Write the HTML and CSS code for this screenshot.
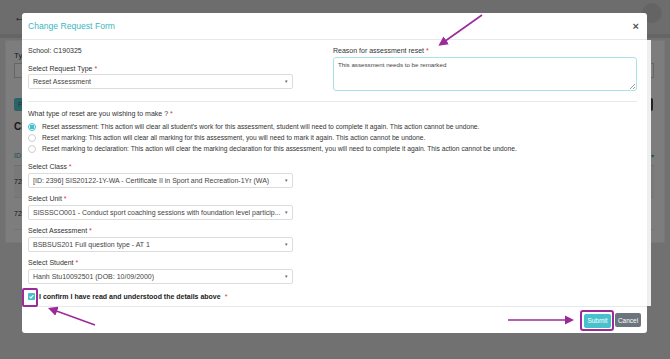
FILE: index.html
```html
<!DOCTYPE html>
<html lang="en">
<head>
  <meta charset="UTF-8">
  <meta name="viewport" content="width=device-width, initial-scale=1.0">
  <title>Change Request Form</title>
  <link rel="stylesheet" href="styles.css">
</head>
<body>
  <div class="page">
    <header class="topbar">
      <span class="back">&#8592;</span>
      <span class="avatar"></span>
    </header>
    <main class="content">
      <section class="card">
        <div class="bg-row filters">
          <div class="bg-left">
            <span class="bg-label">Type</span>
            <div class="bg-input"></div>
          </div>
          <div class="bg-right">
            <div class="bg-select">&#9662;</div>
          </div>
        </div>
        <div class="bg-row actions">
          <span class="bg-btn teal">P</span>
          <span class="bg-btn dark">&#215;</span>
        </div>
        <h2 class="bg-title">Classes</h2>
        <div class="bg-row head">
          <span class="bg-id">ID</span>
          <span class="bg-link">&#9662;</span>
        </div>
        <div class="bg-row item shaded"><span>728</span><span class="bg-link">&#9662;</span></div>
        <div class="bg-row item"><span>727</span><span class="bg-link">&#9662;</span></div>
      </section>
    </main>
  </div>

  <div class="backdrop"></div>

  <div class="modal">
    <div class="modal-header">
      <h1 class="modal-title">Change Request Form</h1>
      <span class="close">&#215;</span>
    </div>
    <div class="modal-body">
      <div class="top-grid">
        <div>
          <p class="school">School: C190325</p>
          <label class="field-label first">Select Request Type <span class="req">*</span></label>
          <div class="select">Reset Assessment<span class="caret">&#9662;</span></div>
        </div>
        <div>
          <label class="field-label">Reason for assessment reset <span class="req">*</span></label>
          <div class="textarea">This assessment needs to be remarked<span class="grip"></span></div>
        </div>
      </div>
      <hr class="divider">
      <p class="field-label question">What type of reset are you wishing to make ? <span class="req">*</span></p>
      <ul class="radios">
        <li><span class="radio checked"></span><span>Reset assessment: This action will clear all student's work for this assessment, student will need to complete it again. This action cannot be undone.</span></li>
        <li><span class="radio"></span><span>Reset marking: This action will clear all marking for this assessment, you will need to mark it again. This action cannot be undone.</span></li>
        <li><span class="radio"></span><span>Reset marking to declaration: This action will clear the marking declaration for this assessment, you will need to complete it again. This action cannot be undone.</span></li>
      </ul>
      <div class="group">
        <label class="field-label">Select Class <span class="req">*</span></label>
        <div class="select">[ID: 2396] SIS20122-1Y-WA - Certificate II in Sport and Recreation-1Yr (WA)<span class="caret">&#9662;</span></div>
      </div>
      <div class="group">
        <label class="field-label">Select Unit <span class="req">*</span></label>
        <div class="select">SISSSCO001 - Conduct sport coaching sessions with foundation level particip...<span class="caret">&#9662;</span></div>
      </div>
      <div class="group">
        <label class="field-label">Select Assessment <span class="req">*</span></label>
        <div class="select">BSBSUS201 Full question type - AT 1<span class="caret">&#9662;</span></div>
      </div>
      <div class="group">
        <label class="field-label">Select Student <span class="req">*</span></label>
        <div class="select">Hanh Stu10092501 (DOB: 10/09/2000)<span class="caret">&#9662;</span></div>
      </div>
      <div class="confirm">
        <span class="check-wrap">
          <span class="checkbox">
            <svg viewBox="0 0 8 8" width="7" height="7"><path d="M1.8 4.2 L3.3 5.6 L6.2 2.4" fill="none" stroke="#fff" stroke-width="1.2"/></svg>
          </span>
          <span class="highlight-box"></span>
        </span>
        <span class="confirm-text">I confirm I have read and understood the details above</span>
        <span class="req">*</span>
      </div>
    </div>
    <div class="modal-footer">
      <span class="submit-ring"><button class="btn btn-submit">Submit</button></span>
      <button class="btn btn-cancel">Cancel</button>
    </div>
    <span class="scroll-strip"></span>
  </div>

  <svg class="arrows" width="670" height="359" viewBox="0 0 670 359">
    <defs>
      <marker id="head" markerWidth="6" markerHeight="6" refX="4" refY="3" orient="auto" markerUnits="strokeWidth">
        <path d="M0 0 L6 3 L0 6 Z" fill="#9a2b98"/>
      </marker>
    </defs>
    <line x1="482" y1="15" x2="441" y2="44" stroke="#9a2b98" stroke-width="1.6" marker-end="url(#head)"/>
    <line x1="95" y1="325" x2="51" y2="309" stroke="#9a2b98" stroke-width="1.6" marker-end="url(#head)"/>
    <line x1="508" y1="320" x2="571" y2="320" stroke="#9a2b98" stroke-width="1.6" marker-end="url(#head)"/>
  </svg>
</body>
</html>
```

FILE: styles.css
```css
* {
  box-sizing: border-box;
}

html, body {
  margin: 0;
  padding: 0;
}

body {
  width: 670px;
  height: 359px;
  overflow: hidden;
  position: relative;
  font-family: "Liberation Sans", Arial, sans-serif;
  color: #333;
  background: #e2e2e2;
}

/* page behind the modal */
.page {
  height: 359px;
}

.topbar {
  height: 38px;
  background: #dadada;
  display: flex;
  align-items: center;
  justify-content: space-between;
  padding: 0 8px 0 14px;
  border-bottom: 4px solid #cacaca;
}

.back {
  font-size: 12px;
  color: #333;
}

.avatar {
  width: 20px;
  height: 20px;
  border-radius: 50%;
  background: #c9c9c9;
  margin-top: -8px;
}

.content {
  padding: 2px 5px;
}

.card {
  background: #fbfbfb;
  border: 1px solid #eee;
  height: 203px;
  padding: 10px 10px 0 8px;
}

.bg-row {
  display: flex;
  justify-content: space-between;
  align-items: center;
}

.bg-label {
  font-size: 8px;
  display: block;
}

.bg-input {
  width: 60px;
  height: 15px;
  border: 1px solid #ccc;
  background: #fff;
  margin-top: 3px;
}

.bg-select {
  width: 30px;
  height: 15px;
  border: 1px solid #ccc;
  background: #fff;
  font-size: 6px;
  text-align: right;
  padding: 3px 3px 0 0;
  margin-top: 12px;
}

.actions {
  margin-top: 20px;
  padding-right: 1px;
}

.bg-btn {
  display: inline-block;
  height: 13px;
  font-size: 7px;
  line-height: 13px;
  padding: 0 4px;
  color: #fff;
  border-radius: 2px;
}

.bg-btn.teal {
  background: #59c6cf;
  color: #2a7a80;
  width: 24px;
}

.bg-btn.dark {
  background: #444;
  width: 14px;
}

.bg-title {
  font-size: 10px;
  margin: 10px 0 0;
}

.head {
  margin-top: 20px;
  font-size: 7px;
  color: #2a9fab;
  border-bottom: 1px solid #ddd;
  padding-bottom: 6px;
}

.bg-link {
  color: #2a9fab;
  font-size: 6px;
}

.item {
  height: 32px;
  font-size: 7px;
  border-bottom: 1px solid #e6e6e6;
  padding-right: 4px;
}

.item.shaded {
  background: #f3f3f3;
}

.backdrop {
  position: absolute;
  inset: 0;
  background: rgba(0, 0, 0, 0.5);
}

/* modal */
.modal {
  position: absolute;
  left: 22px;
  top: 13px;
  width: 625px;
  height: 320px;
  background: #fff;
  border-radius: 3px;
  display: flex;
  flex-direction: column;
}

.modal-header {
  height: 27px;
  flex: none;
  display: flex;
  align-items: center;
  justify-content: space-between;
  padding: 0 8px 0 6px;
  border-bottom: 1px solid #e6e9ec;
}

.modal-title {
  margin: 0;
  font-size: 8.6px;
  font-weight: normal;
  color: #3cb6c4;
}

.close {
  font-size: 11px;
  font-weight: bold;
  color: #555;
}

.modal-body {
  flex: 1;
  padding: 6px 10px 0 6px;
}

.top-grid {
  display: grid;
  grid-template-columns: 265px 1fr;
  column-gap: 40px;
}

.school {
  margin: 0;
  font-size: 7px;
  line-height: 10px;
}

.field-label {
  display: block;
  font-size: 7px;
  line-height: 10px;
  margin: 0;
}

.field-label.first {
  margin-top: 8px;
}

.req {
  color: #e0342f;
}

.select {
  position: relative;
  height: 15px;
  border: 1px solid #dcdcdc;
  border-radius: 2px;
  font-size: 7px;
  line-height: 13px;
  padding: 0 14px 0 4px;
  color: #444;
  white-space: nowrap;
  overflow: hidden;
}

.caret {
  position: absolute;
  right: 4px;
  top: 0;
  font-size: 5px;
  color: #666;
}

.textarea {
  position: relative;
  height: 34px;
  margin-top: 1px;
  border: 1px solid #a9e2e7;
  border-radius: 3px;
  font-size: 6.2px;
  padding: 3px 4px;
  color: #444;
}

.grip {
  position: absolute;
  right: 1px;
  bottom: 1px;
  width: 5px;
  height: 5px;
  background: linear-gradient(135deg, transparent 45%, #999 45%, #999 55%, transparent 55%, transparent 70%, #999 70%, #999 80%, transparent 80%);
}

.divider {
  border: 0;
  border-top: 1px solid #e8e8e8;
  margin: 10px 0 0;
}

.question {
  margin-top: 7px;
}

.radios {
  list-style: none;
  margin: 2px 0 0;
  padding: 0;
}

.radios li {
  display: flex;
  align-items: center;
  font-size: 6.7px;
  line-height: 11px;
  height: 11px;
  color: #333;
  white-space: nowrap;
}

.radio {
  width: 8px;
  height: 8px;
  border-radius: 50%;
  border: 1px solid #cfcfcf;
  margin: 0 6px 0 0;
  flex: none;
}

.radio.checked {
  border-color: #45bfcb;
  background: radial-gradient(circle, #45bfcb 0 2.2px, #fff 2.6px);
}

.group {
  width: 265px;
  margin-top: 8px;
}

.group + .group {
  margin-top: 6px;
}

.group .select {
  margin-top: 1px;
}

.confirm {
  display: flex;
  align-items: center;
  height: 12px;
  margin-top: 6px;
  font-size: 7px;
}

.check-wrap {
  position: relative;
  width: 7px;
  height: 7px;
  margin-right: 4px;
}

.checkbox {
  display: block;
  width: 7px;
  height: 7px;
  background: #45bfcb;
  border-radius: 1px;
  line-height: 0;
}

.highlight-box {
  position: absolute;
  left: -6px;
  top: -5px;
  width: 16px;
  height: 19px;
  border: 2px solid #9a2b98;
  border-radius: 2px;
}

.confirm-text {
  font-weight: bold;
  color: #222;
  margin-right: 4px;
}

.modal-footer {
  height: 27px;
  flex: none;
  display: flex;
  justify-content: flex-end;
  align-items: center;
  padding-right: 6px;
  border-top: 1px solid #e6e9ec;
}

.submit-ring {
  border: 2px solid #9a2b98;
  border-radius: 3px;
  padding: 2px 1px 1px 2px;
  margin-right: 1px;
  line-height: 0;
}

.btn {
  height: 14px;
  border: 0;
  border-radius: 2px;
  font-family: "Liberation Sans", Arial, sans-serif;
  font-size: 6.5px;
  color: #fff;
  padding: 0;
}

.btn-submit {
  width: 27px;
  background: #47c1cc;
}

.btn-cancel {
  width: 26px;
  background: #6c757d;
}

.scroll-strip {
  position: absolute;
  right: -4px;
  top: 27px;
  width: 4px;
  height: 266px;
  background: #efefef;
}

.arrows {
  position: absolute;
  left: 0;
  top: 0;
  pointer-events: none;
}
```
